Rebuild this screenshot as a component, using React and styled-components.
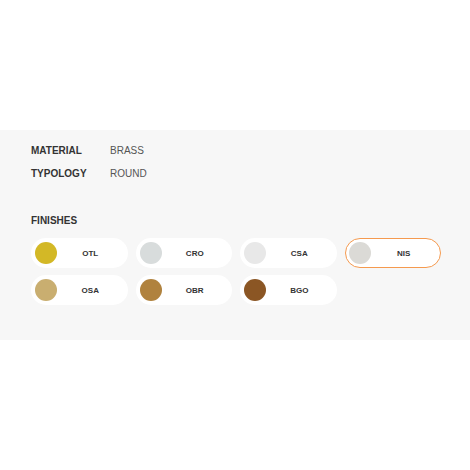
import React from "react";
import styled, { createGlobalStyle } from "styled-components";

const GlobalStyle = createGlobalStyle`
  html, body {
    margin: 0;
    padding: 0;
    background: #ffffff;
    font-family: "Liberation Sans", Arial, sans-serif;
  }
`;

const Page = styled.div`
  width: 470px;
  height: 470px;
  padding-top: 130px;
  box-sizing: border-box;
`;

const Panel = styled.section`
  background: #f7f7f7;
  padding: 15px 31px 35px;
`;

const SpecRow = styled.div`
  display: flex;
  align-items: center;
  height: 12px;
  line-height: 12px;
  margin-bottom: 11px;
  font-size: 10px;
`;

const SpecLabel = styled.span`
  width: 79px;
  font-weight: 700;
  color: #333;
`;

const SpecValue = styled.span`
  color: #555;
`;

const SectionTitle = styled.h3`
  margin: 35px 0 11px;
  font-size: 10px;
  line-height: 12px;
  font-weight: 700;
  color: #333;
`;

const Grid = styled.div`
  display: grid;
  grid-template-columns: repeat(4, 96.5px);
  gap: 7px 8px;
`;

const Chip = styled.button`
  display: flex;
  align-items: center;
  height: 30px;
  padding: 0 3px;
  box-sizing: border-box;
  border-radius: 15px;
  background: #fff;
  border: 1px solid ${({ $active }) => ($active ? "#f59a4f" : "transparent")};
  font-family: inherit;
  cursor: pointer;
`;

const Swatch = styled.span`
  width: 22px;
  height: 22px;
  border-radius: 50%;
  background: ${({ $color }) => $color};
  flex: none;
`;

const ChipLabel = styled.span`
  flex: 1;
  text-align: center;
  font-size: 8px;
  font-weight: 700;
  color: #333;
`;

const finishes = [
  { code: "OTL", color: "#d3b826" },
  { code: "CRO", color: "#d8dcdc" },
  { code: "CSA", color: "#e8e8e8" },
  { code: "NIS", color: "#dbdad6", active: true },
  { code: "OSA", color: "#c9ae70" },
  { code: "OBR", color: "#b0823e" },
  { code: "BGO", color: "#8b5624" },
];

export default function App() {
  return (
    <Page>
      <GlobalStyle />
      <Panel>
        <SpecRow>
          <SpecLabel>MATERIAL</SpecLabel>
          <SpecValue>BRASS</SpecValue>
        </SpecRow>
        <SpecRow>
          <SpecLabel>TYPOLOGY</SpecLabel>
          <SpecValue>ROUND</SpecValue>
        </SpecRow>
        <SectionTitle>FINISHES</SectionTitle>
        <Grid>
          {finishes.map((f) => (
            <Chip key={f.code} $active={f.active}>
              <Swatch $color={f.color} />
              <ChipLabel>{f.code}</ChipLabel>
            </Chip>
          ))}
        </Grid>
      </Panel>
    </Page>
  );
}
